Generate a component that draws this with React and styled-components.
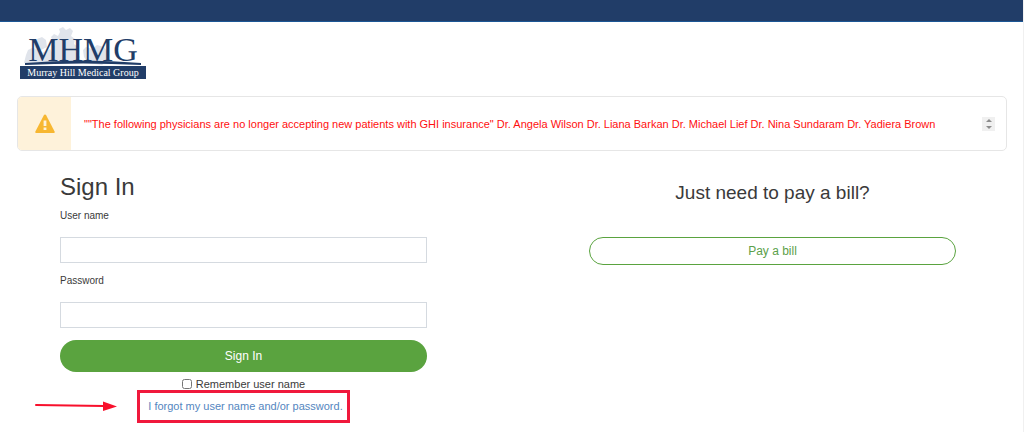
import React, { useState } from 'react';
import styled, { createGlobalStyle } from 'styled-components';

const notice = `""The following physicians are no longer accepting new patients with GHI insurance" Dr. Angela Wilson Dr. Liana Barkan Dr. Michael Lief Dr. Nina Sundaram Dr. Yadiera Brown`;

const Logo = () => (
    <LogoSvg viewBox="0 0 126 54" role="img" aria-label="Murray Hill Medical Group">
        <g fill="#e0e4eb">
            <path d="M4 36 L6 28 L8 23 L12 21 L18 22 L22 26 L30 22 L34 29 L33 37 Z" />
            <path d="M31 10 L34 7 L38 9 L40 5 L39 2 L43 0 L46 3 L50 1 L53 4 L51 9 L55 12 L54 17 L58 20 L56 25 L60 30 L57 36 L36 36 L32 24 L35 17 Z" />
            <path d="M14 17 L17 12 L22 10 L26 13 L27 20 L21 23 L15 21 Z" />
            <path d="M63 23 L66 20 L72 22 L77 18 L84 20 L89 27 L87 34 L82 38 L68 36 L64 30 Z" />
        </g>
        <LogoLetters x="63" y="34">MHMG</LogoLetters>
        <path d="M5 36 Q63 31 121 36 L121 38 Q63 35 5 38 Z" fill="#213d68" />
        <rect x="0" y="39" width="126" height="13" fill="#213d68" />
        <LogoName x="63" y="49">Murray Hill Medical Group</LogoName>
    </LogoSvg>
);

const App = () => {

    const [form, setForm] = useState({ userName: "", password: "", remember: false });

    const handleChange = (e) => {
        const { name, type, checked, value } = e.target;
        setForm({ ...form, [name]: type === "checkbox" ? checked : value })
    }

    return (
        <Page>
            <GlobalStyle />
            <TopBar />
            <Content>
                <Logo />
                <Alert role="alert">
                    <AlertIcon>
                        <svg viewBox="0 0 20 20" width="20" height="20" aria-hidden="true">
                            <path d="M10 .5 Q10.8 .5 11.3 1.4 L19.6 17.4 Q20.2 19 18.8 19 H1.2 Q-.2 19 .4 17.4 L8.7 1.4 Q9.2 .5 10 .5 Z" fill="#f7b731" />
                            <path d="M8.6 6.5 H11.4 V12 H8.6 Z M8.6 13.4 H11.4 V16 H8.6 Z" fill="#fef2da" />
                        </svg>
                    </AlertIcon>
                    <AlertText>{notice}</AlertText>
                    <Stepper>
                        <StepButton type="button" aria-label="Previous">
                            <svg viewBox="0 0 6 3" width="6" height="3"><path d="M0 3 L3 0 L6 3 Z" fill="#8c8c8c" /></svg>
                        </StepButton>
                        <StepButton type="button" aria-label="Next">
                            <svg viewBox="0 0 6 3" width="6" height="3"><path d="M0 0 L3 3 L6 0 Z" fill="#8c8c8c" /></svg>
                        </StepButton>
                    </Stepper>
                </Alert>
                <Columns>
                    <form onSubmit={(e) => e.preventDefault()}>
                        <Title>Sign In</Title>
                        <Field>
                            <label htmlFor="userName">User name</label>
                            <input id="userName" name="userName" type="text" value={form.userName} onChange={handleChange} />
                        </Field>
                        <Field>
                            <label htmlFor="password">Password</label>
                            <input id="password" name="password" type="password" value={form.password} onChange={handleChange} />
                        </Field>
                        <SubmitButton>Sign In</SubmitButton>
                        <Remember>
                            <input id="remember" name="remember" type="checkbox" checked={form.remember} onChange={handleChange} />
                            <label htmlFor="remember">Remember user name</label>
                        </Remember>
                        <Forgot>
                            <a href="#forgot">I forgot my user name and/or password.</a>
                            <Arrow viewBox="0 0 84 12" aria-hidden="true">
                                <path d="M2 5 L70 6" stroke="#f8102c" strokeWidth="2" strokeLinecap="round" />
                                <path d="M69 1.5 L83 6.5 L69 11 Z" fill="#f8102c" />
                            </Arrow>
                        </Forgot>
                    </form>
                    <PayPanel>
                        <h2>Just need to pay a bill?</h2>
                        <PayButton type="button">Pay a bill</PayButton>
                    </PayPanel>
                </Columns>
            </Content>
        </Page>
    );
}

export default App;

const GlobalStyle = createGlobalStyle`
    *{
        box-sizing: border-box;
    }
    body{
        margin: 0;
        background-color: #fff;
        color: #3a3a3a;
        font-family: "Liberation Sans", Arial, sans-serif;
        font-size: 11px;
    }
    input, button{
        font-family: inherit;
    }
`

const Page = styled.div`
    min-height: 100vh;
    border-right: 1px solid #f0f0f0;
`

const TopBar = styled.header`
    height: 22px;
    background-color: #213d68;
    border-bottom: 1px solid #1c5795;
`

const Content = styled.main`
    padding: 5px 16px 0 17px;
`

const LogoSvg = styled.svg`
    display: block;
    width: 126px;
    height: 54px;
    margin-left: 3px;
`

const LogoLetters = styled.text`
    font-family: "Liberation Serif", "Times New Roman", serif;
    font-size: 34px;
    fill: #213d68;
    text-anchor: middle;
`

const LogoName = styled.text`
    font-family: "Liberation Serif", "Times New Roman", serif;
    font-size: 10px;
    fill: #fff;
    text-anchor: middle;
`

const Alert = styled.div`
    display: flex;
    align-items: center;
    min-height: 55px;
    margin-top: 15px;
    border: 1px solid #e6e6e6;
    border-radius: 5px;
    overflow: hidden;
`

const AlertIcon = styled.div`
    display: flex;
    align-items: center;
    justify-content: center;
    align-self: stretch;
    width: 53px;
    background-color: #fef2da;
`

const AlertText = styled.p`
    flex: 1;
    margin: 0;
    padding-left: 13px;
    color: #ff0f0f;
`

const Stepper = styled.div`
    display: flex;
    flex-direction: column;
    width: 13px;
    margin-right: 11px;
    background-color: #f0f0f0;
`

const StepButton = styled.button`
    display: flex;
    align-items: center;
    justify-content: center;
    height: 7px;
    padding: 0;
    border: none;
    background: none;
`

const Columns = styled.div`
    display: grid;
    grid-template-columns: 1fr 1fr;
    gap: 162px;
    padding: 20px 51px 0 43px;
`

const Title = styled.h1`
    margin: 0 0 7px;
    font-size: 24px;
    line-height: 32px;
    font-weight: 400;
`

const Field = styled.div`
    display: flex;
    flex-direction: column;
    gap: 16px;
    margin-bottom: 12px;
    label{
        font-size: 10px;
        line-height: 11px;
    }
    input{
        width: 100%;
        height: 26px;
        padding: 0 8px;
        border: 1px solid #d5dae0;
    }
`

const SubmitButton = styled.button`
    display: block;
    width: 100%;
    height: 32px;
    border: none;
    border-radius: 16px;
    background-color: #5aa33f;
    color: #fff;
    font-size: 12px;
`

const Remember = styled.div`
    display: flex;
    align-items: center;
    justify-content: center;
    gap: 4px;
    height: 12px;
    margin-top: 6px;
    input{
        width: 10px;
        height: 10px;
        margin: 0;
    }
`

const Forgot = styled.div`
    position: relative;
    display: flex;
    justify-content: center;
    a{
        padding: 7px 4px 8px 8px;
        border: 3px solid #f0183c;
        line-height: 12px;
        color: #5486c0;
        text-decoration: none;
    }
`

const Arrow = styled.svg`
    position: absolute;
    top: 10px;
    left: -26px;
    width: 84px;
    height: 12px;
`

const PayPanel = styled.section`
    text-align: center;
    h2{
        margin: 0 0 30px;
        padding-top: 8px;
        font-size: 19px;
        line-height: 28px;
        font-weight: 400;
    }
`

const PayButton = styled.button`
    width: 100%;
    height: 28px;
    border: 1px solid #5aa33f;
    border-radius: 14px;
    background-color: #fff;
    color: #5c9f4a;
    font-size: 12px;
`
